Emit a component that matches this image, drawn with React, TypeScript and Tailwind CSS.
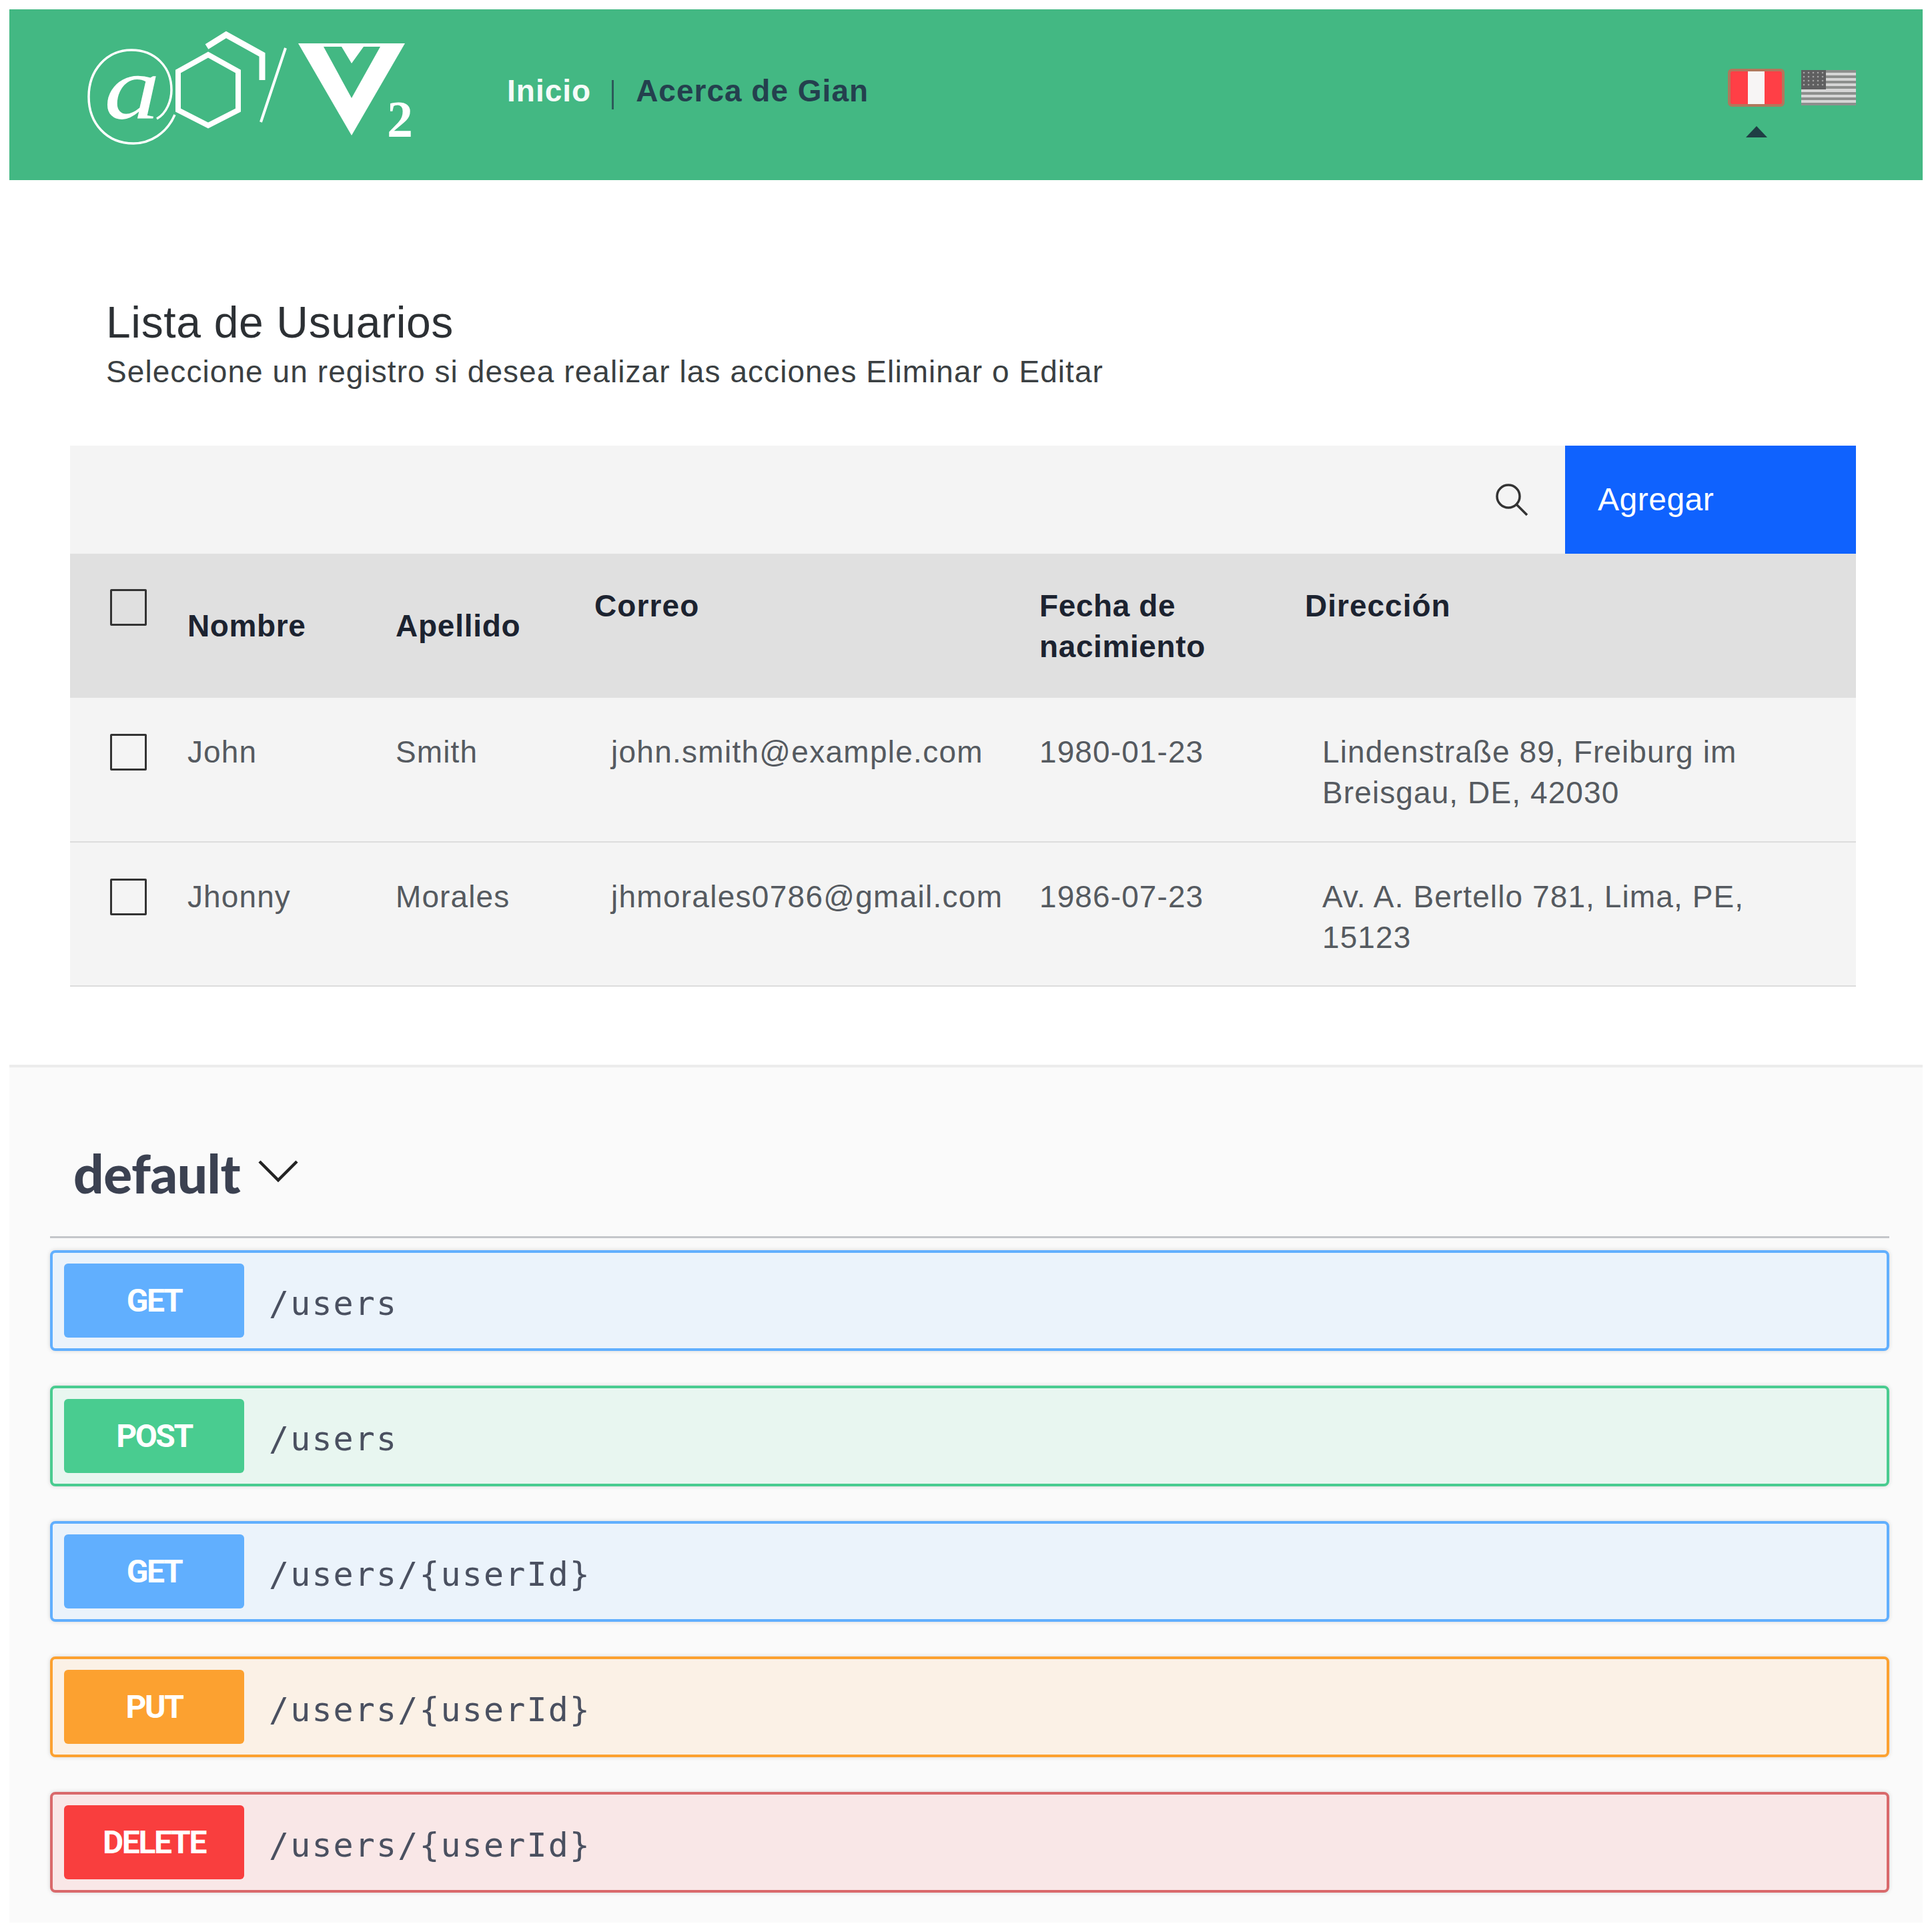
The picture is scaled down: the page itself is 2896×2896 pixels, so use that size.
import React from "react";

function Logo() {
  return (
    <svg width="500" height="180" viewBox="125 45 500 180" className="block shrink-0" aria-label="@/V2 logo">
      <path d="M262 172 C 250 200, 225 215, 200 215 C 160 215, 133 185, 133 145 C 133 105, 160 75, 197 75 C 232 75, 257 100, 257 135 C 257 150, 250 170, 235 178" fill="none" stroke="#fff" strokeWidth="3.5" />
      <text x="156" y="178" fontFamily="'Liberation Serif', serif" fontStyle="italic" fontSize="135" fill="#ffffff" textLength="84" lengthAdjust="spacingAndGlyphs">a</text>
      <polygon points="312,82 357,107 357,165 312,188 267,165 267,107" fill="none" stroke="#fff" strokeWidth="8" />
      <polyline points="310,70 339,52 393,82 393,120" fill="none" stroke="#fff" strokeWidth="9" />
      <line x1="428" y1="72" x2="391" y2="183" stroke="#fff" strokeWidth="4" />
      <polygon points="447,65 607,65 527,203" fill="#fff" />
      <polygon points="485,70 512,70 527,95 545,70 570,70 527,147" fill="#43b883" />
      <text x="580" y="205" fontFamily="'Liberation Serif', serif" fontWeight="700" fontSize="78" fill="#ffffff">2</text>
    </svg>
  );
}

function PeruFlag() {
  return (
    <div className="flex h-[57px] w-[85px] overflow-hidden rounded-[6px] border-[4px] border-[#b0785c]">
      <div className="flex-1 bg-[#ff3f46]" />
      <div className="flex-1 bg-[#f7f5f5]" />
      <div className="flex-1 bg-[#ff3f46]" />
    </div>
  );
}

function UsFlag() {
  return (
    <svg width="82" height="53" viewBox="0 0 82 53" className="block">
      <rect width="82" height="53" fill="#d6d6d6" />
      {[0, 8, 16, 24, 33, 41, 49].map((y) => (
        <rect key={y} x="0" y={y} width="82" height="4" fill="#8d8f8d" />
      ))}
      <rect width="37" height="29" fill="#5f5f60" />
      {[4, 10, 16, 22].map((y) =>
        [4, 11, 18, 25, 32].map((x) => <circle key={`${x}-${y}`} cx={x} cy={y} r="1.3" fill="#a5a5a5" />)
      )}
    </svg>
  );
}

function Check() {
  return <div className="h-[55px] w-[55px] shrink-0 rounded-[2px] border-[3px] border-[#333333]" />;
}

const users = [
  { n: "John", a: "Smith", c: "john.smith@example.com", f: "1980-01-23", d: ["Lindenstraße 89, Freiburg im", "Breisgau, DE, 42030"] },
  { n: "Jhonny", a: "Morales", c: "jhmorales0786@gmail.com", f: "1986-07-23", d: ["Av. A. Bertello 781, Lima, PE,", "15123"] },
];

const ops = [
  { m: "GET", p: "/users", row: "border-[#61affe] bg-[#ebf3fb]", badge: "bg-[#61affe]" },
  { m: "POST", p: "/users", row: "border-[#49cc90] bg-[#e8f6f0]", badge: "bg-[#49cc90]" },
  { m: "GET", p: "/users/{userId}", row: "border-[#61affe] bg-[#ebf3fb]", badge: "bg-[#61affe]" },
  { m: "PUT", p: "/users/{userId}", row: "border-[#fca130] bg-[#fbf1e6]", badge: "bg-[#fca130]" },
  { m: "DELETE", p: "/users/{userId}", row: "border-[#d9696b] bg-[#f9e7e7]", badge: "bg-[#f93e3e]" },
];

export default function App() {
  return (
    <div className="h-[2896px] w-[2896px] bg-white px-[14px] pt-[14px] font-['Liberation_Sans',sans-serif]">
      <header className="flex h-[256px] items-start bg-[#43b883] pl-[111px] pr-[100px]">
        <div className="mt-[31px]"><Logo /></div>
        <nav className="ml-[135px] mt-[94px] flex items-center text-[46px] font-bold leading-[56px]">
          <span className="tracking-[1px] text-[#f5fbf8]">Inicio</span>
          <span className="ml-[31px] mr-[33px] h-[44px] w-[3px] translate-y-[6px] bg-[#2d5a5a]" />
          <span className="tracking-[1px] text-[#24404e]">Acerca de Gian</span>
        </nav>
        <div className="ml-auto mt-[89px] flex items-start gap-[25px]">
          <div className="flex flex-col items-center">
            <PeruFlag />
            <div className="mt-[29px] h-0 w-0 border-x-[16px] border-b-[17px] border-x-transparent border-b-[#1f3d44]" />
          </div>
          <div className="mt-[2px]"><UsFlag /></div>
        </div>
      </header>

      <section className="pl-[145px] pt-[170px] text-[#2c3034]">
        <h1 className="text-[66px] font-normal leading-[86px] tracking-[0.65px]">Lista de Usuarios</h1>
        <p className="text-[46px] leading-[62px] tracking-[1.07px] text-[#3a3f42]">Seleccione un registro si desea realizar las acciones Eliminar o Editar</p>
      </section>

      <section className="ml-[91px] mt-[80px] w-[2677px]">
        <div className="flex h-[162px] items-center justify-end bg-[#f4f4f4]">
          <svg width="50" height="50" viewBox="0 0 50 50" className="mr-[55px] block" fill="none" stroke="#333" strokeWidth="3.5">
            <circle cx="20" cy="20" r="17" />
            <line x1="32" y1="32" x2="48" y2="48" />
          </svg>
          <button className="flex h-full w-[436px] items-center bg-[#0f62fe] pl-[49px] text-left text-[48px] tracking-[0.5px] text-white">Agregar</button>
        </div>

        <div className="flex h-[216px] bg-[#e0e0e0] text-[46px] font-bold leading-[61px] tracking-[0.6px] text-[#1c2330]">
          <div className="w-[176px] pl-[60px] pt-[53px]"><Check /></div>
          <div className="w-[312px] pt-[78px]">Nombre</div>
          <div className="w-[298px] pt-[78px] tracking-[0.75px]">Apellido</div>
          <div className="w-[667px] pt-[48px] tracking-[1.1px]">Correo</div>
          <div className="w-[398px] pt-[48px]">Fecha de<br />nacimiento</div>
          <div className="flex-1 pt-[48px] tracking-[1px]">Dirección</div>
        </div>

        {users.map((u) => (
          <div key={u.c} className="flex h-[216.5px] border-b-[2px] border-[#dcdcdc] bg-[#f4f4f4] text-[46px] leading-[61px] tracking-[1.1px] text-[#555a60]">
            <div className="w-[176px] pl-[60px] pt-[54px]"><Check /></div>
            <div className="w-[312px] pt-[51px]">{u.n}</div>
            <div className="w-[298px] pt-[51px]">{u.a}</div>
            <div className="w-[667px] pl-[25px] pt-[51px] tracking-[1.27px]">{u.c}</div>
            <div className="w-[398px] pt-[51px]">{u.f}</div>
            <div className="flex-1 pl-[26px] pt-[51px]">{u.d[0]}<br />{u.d[1]}</div>
          </div>
        ))}
      </section>

      <section className="mt-[117px] h-[1286px] border-t-[4px] border-[#ececec] bg-[#fafafa] pl-[61px] pr-[50px]">
        <div className="flex h-[256px] items-center gap-[27px] border-b-[3px] border-[#c4c6ca] pl-[35px] pt-[62px]">
          <span className="font-['Lato',sans-serif] text-[80px] font-black tracking-[-0.5px] text-[#3b4151]">default</span>
          <svg width="60" height="34" viewBox="0 0 60 34" className="-translate-y-[3px]" fill="none" stroke="#222" strokeWidth="4.5">
            <polyline points="2,3 30,31 58,3" />
          </svg>
        </div>
        <div className="mt-[18px] flex flex-col gap-[52px]">
          {ops.map((o, i) => (
            <div key={i} className={`flex h-[151px] items-center rounded-[8px] border-[4px] pl-[17px] shadow-[0_0_6px_rgba(0,0,0,0.15)] ${o.row}`}>
              <div className={`flex h-[111px] w-[270px] items-center justify-center rounded-[6px] font-['Roboto',sans-serif] text-[48px] font-bold tracking-[-2.4px] text-white ${o.badge}`}>{o.m}</div>
              <div className="ml-[37px] translate-y-[5px] font-['DejaVu_Sans_Mono',monospace] text-[50px] tracking-[2.1px] text-[#4a5060]">{o.p}</div>
            </div>
          ))}
        </div>
      </section>
    </div>
  );
}
